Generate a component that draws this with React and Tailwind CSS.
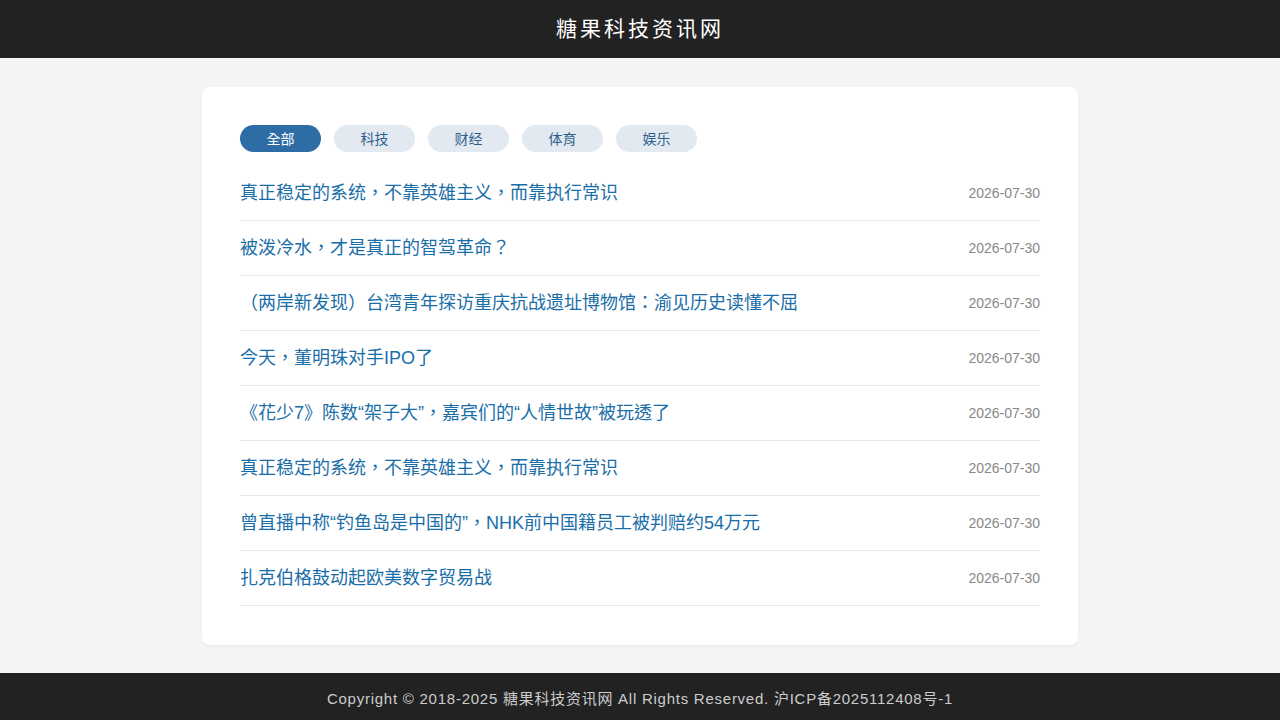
import React from 'react';

const tabs = ['全部', '科技', '财经', '体育', '娱乐'];

const news = [
  '真正稳定的系统，不靠英雄主义，而靠执行常识',
  '被泼冷水，才是真正的智驾革命？',
  '（两岸新发现）台湾青年探访重庆抗战遗址博物馆：渝见历史读懂不屈',
  '今天，董明珠对手IPO了',
  '《花少7》陈数“架子大”，嘉宾们的“人情世故”被玩透了',
  '真正稳定的系统，不靠英雄主义，而靠执行常识',
  '曾直播中称“钓鱼岛是中国的”，NHK前中国籍员工被判赔约54万元',
  '扎克伯格鼓动起欧美数字贸易战',
];

const font = { fontFamily: '"Liberation Sans", "Noto Sans CJK TC", sans-serif' };

export default function App() {
  return (
    <div className="min-h-screen flex flex-col bg-[#f3f4f6]" style={font}>
      <header className="h-[58px] bg-[#222222] flex items-center justify-center">
        <h1 className="text-[21px] tracking-[3px] text-white">糖果科技资讯网</h1>
      </header>

      <main className="flex-1 flex justify-center pt-[29px] pb-[28px]">
        <div className="w-[876px] bg-white rounded-lg shadow-[0_1px_3px_rgba(0,0,0,0.06)] px-[38px] pt-[38px] pb-[39px]">
          <div className="flex gap-[13px] mb-[14px]">
            {tabs.map((t, i) => (
              <button
                key={t}
                className={
                  i === 0
                    ? 'w-[81px] h-[27px] pt-[1px] rounded-full bg-[#2d6ca5] text-white text-[14px]'
                    : 'w-[81px] h-[27px] pt-[1px] rounded-full bg-[#e3e9f1] text-[#2f5f8c] text-[14px]'
                }
              >
                {t}
              </button>
            ))}
          </div>
          <ul>
            {news.map((n, i) => (
              <li key={i} className="h-[55px] pt-[1px] flex items-center justify-between border-b border-[#e8e8e8]">
                <a className="text-[18px] text-[#1a6ea8]">{n}</a>
                <span className="text-[14px] text-[#888888]">2026-07-30</span>
              </li>
            ))}
          </ul>
        </div>
      </main>

      <footer className="h-[47px] pt-[5px] bg-[#222222] flex items-center justify-center">
        <p className="text-[15px] tracking-[0.75px] text-[#cccccc]">
          Copyright © 2018-2025 糖果科技资讯网 All Rights Reserved. 沪ICP备2025112408号-1
        </p>
      </footer>
    </div>
  );
}
